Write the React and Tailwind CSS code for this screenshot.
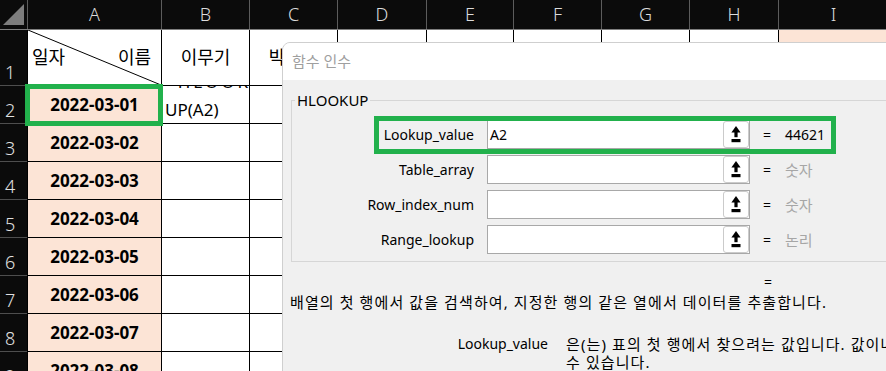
import React from "react";

const cols = [
  { l: "A", w: "w-[134px]" },
  { l: "B", w: "w-[88px]" },
  { l: "C", w: "w-[88px]" },
  { l: "D", w: "w-[89px]" },
  { l: "E", w: "w-[87px]" },
  { l: "F", w: "w-[88px]" },
  { l: "G", w: "w-[88px]" },
  { l: "H", w: "w-[89px]" },
  { l: "I", w: "w-[110px]" },
  { l: "J", w: "w-[88px]" },
];

const dates = [
  "2022-03-01",
  "2022-03-02",
  "2022-03-03",
  "2022-03-04",
  "2022-03-05",
  "2022-03-06",
  "2022-03-07",
  "2022-03-08",
];

function UploadIcon() {
  return (
    <svg width="10" height="17" viewBox="0 0 10 17">
      <polygon points="5,0 9.6,6.5 0.4,6.5" fill="#000" />
      <rect x="3.4" y="6" width="3.2" height="5.2" fill="#000" />
      <rect x="0.5" y="13" width="9" height="3.2" fill="#000" />
    </svg>
  );
}

function ArgRow({ label, value, result, resultGray }) {
  return (
    <div className="flex items-center h-[29px]">
      <div className="w-[182px] text-right text-[14px] leading-[20px] text-black whitespace-nowrap">
        {label}
      </div>
      <div className="ml-[13px] w-[263px] h-full border border-[#a8a8a8] bg-white flex items-stretch">
        <div className="flex-1 flex items-center pl-[2px] text-[14px] text-black">{value}</div>
        <div className="w-[26px] border border-[#cbcbcb] rounded-[3px] bg-white flex items-center justify-center">
          <UploadIcon />
        </div>
      </div>
      <div className="ml-[13px] w-[9px] text-[14px] text-black leading-[20px]">=</div>
      <div
        className={
          resultGray
            ? "ml-[13px] text-[15px] text-[#a6a6a6] leading-[20px] whitespace-nowrap"
            : "ml-[13px] text-[14px] text-black leading-[20px] whitespace-nowrap"
        }
      >
        {result}
      </div>
    </div>
  );
}

export default function App() {
  const rowHeights = ["h-[56px]", "h-[38px]", "h-[38px]", "h-[38px]", "h-[38px]", "h-[38px]", "h-[38px]", "h-[38px]", "h-[38px]"];

  return (
    <div className="relative w-[886px] h-[371px] overflow-hidden bg-white font-['Noto_Sans','Noto_Sans_CJK_KR',sans-serif]">
      {/* column header */}
      <div className="flex h-[30px] bg-[#0b0b0b] border-b border-[#7f7f7f]">
        <div className="w-[27px] shrink-0 pl-[3px] pt-[4px]">
          <svg width="21" height="21" viewBox="0 0 21 21">
            <polygon points="21,0 21,21 0,21" fill="#7d7d7d" />
          </svg>
        </div>
        {cols.map((c) => (
          <div
            key={c.l}
            className={`${c.w} shrink-0 border-l border-[#5c5c5c] flex items-center justify-center text-[18px] font-light text-[#dcdcdc]`}
          >
            {c.l}
          </div>
        ))}
      </div>

      {/* rows */}
      {rowHeights.map((h, ri) => (
        <div key={ri} className={`flex ${h}`}>
          <div className="w-[27px] shrink-0 bg-[#0b0b0b] border-b border-[#4e4e4e] flex items-end pl-[5px] pb-[3px] text-[18px] leading-[20px] font-light text-[#e0e0e0]">
            {ri + 1}
          </div>
          {cols.map((c, ci) => {
            const base = `${c.w} shrink-0 h-full border-b border-black`;
            const left = ci === 0 ? "border-l border-[#808080]" : "border-l border-black";
            if (ri === 0) {
              if (ci === 0) {
                return (
                  <div key={c.l} className={`${base} ${left} relative bg-white`}>
                    <svg className="absolute inset-0 w-full h-full" viewBox="0 0 100 100" preserveAspectRatio="none">
                      <line x1="0" y1="0" x2="100" y2="100" stroke="#000" strokeWidth="1" vectorEffect="non-scaling-stroke" />
                    </svg>
                    <div className="relative h-full flex items-center justify-between pl-[4px] pr-[10px] text-[18px] text-black">
                      <span>일자</span>
                      <span>이름</span>
                    </div>
                  </div>
                );
              }
              if (ci === 1) {
                return (
                  <div key={c.l} className={`${base} ${left} flex items-center justify-center text-[18px] text-black`}>
                    이무기
                  </div>
                );
              }
              if (ci === 2) {
                return (
                  <div key={c.l} className={`${base} ${left} flex items-center justify-center text-[18px] text-black whitespace-nowrap`}>
                    박보람
                  </div>
                );
              }
              if (ci === 8) {
                return <div key={c.l} className={`${base} ${left} bg-[#fce4d6]`} />;
              }
              return <div key={c.l} className={`${base} ${left} bg-white`} />;
            }
            if (ci === 0) {
              return (
                <div key={c.l} className={`${base} ${left} bg-[#fce4d6] flex items-center justify-center text-[17px] font-bold text-black`}>
                  {dates[ri - 1]}
                </div>
              );
            }
            if (ci === 1 && ri === 1) {
              return (
                <div key={c.l} className={`${base} ${left} overflow-hidden flex flex-col justify-between pl-[3px] pb-[3px] text-[17px] text-black`}>
                  <div className="h-[3px] overflow-hidden flex items-end">
                    <span className="leading-[14px] whitespace-nowrap tracking-[3px]">=HLOOK</span>
                  </div>
                  <div className="leading-[20px] whitespace-nowrap">UP(A2)</div>
                </div>
              );
            }
            return <div key={c.l} className={`${base} ${left} bg-white`} />;
          })}
        </div>
      ))}

      {/* dialog */}
      <div className="absolute left-[282px] top-[42px] w-[640px] h-[360px] border border-[#cfcfcf] rounded-tl-[8px] bg-[#f0f0f0] overflow-hidden">
        <div className="h-[37px] bg-white flex items-center pl-[9px] text-[15px] text-[#9f9f9f]">함수 인수</div>
        <fieldset className="mt-[10px] ml-[8px] w-[700px] border border-[#d6d6d6] pt-[10px] pb-[7px]">
          <legend className="ml-[3px] px-[2px] text-[15px] leading-[20px] text-black">HLOOKUP</legend>
          <div className="flex flex-col gap-[6px]">
            <ArgRow label="Lookup_value" value="A2" result="44621" />
            <ArgRow label="Table_array" value="" result="숫자" resultGray />
            <ArgRow label="Row_index_num" value="" result="숫자" resultGray />
            <ArgRow label="Range_lookup" value="" result="논리" resultGray />
          </div>
        </fieldset>
        <div className="mt-[10px] h-[20px] pl-[481px] text-[14px] leading-[20px] text-black">=</div>
        <div className="h-[20px] pl-[7px] text-[15px] leading-[20px] tracking-[1.1px] text-black whitespace-nowrap">
          배열의 첫 행에서 값을 검색하여, 지정한 행의 같은 열에서 데이터를 추출합니다.
        </div>
        <div className="mt-[23px] flex text-black">
          <div className="w-[265px] shrink-0 text-right text-[14px] leading-[18px]">Lookup_value</div>
          <div className="ml-[18px] text-[15px] leading-[18px] tracking-[1.1px] whitespace-nowrap">
            <div>은(는) 표의 첫 행에서 찾으려는 값입니다. 값이나 참조 또는 텍스트 문자열이 될</div>
            <div>수 있습니다.</div>
          </div>
        </div>
      </div>

      {/* green highlight annotations */}
      <div className="absolute left-[25px] top-[84px] w-[138px] h-[42px] border-[5px] border-[#22b14c]" />
      <div className="absolute left-[374px] top-[116px] w-[462px] h-[38px] border-[5px] border-[#22b14c]" />
    </div>
  );
}
